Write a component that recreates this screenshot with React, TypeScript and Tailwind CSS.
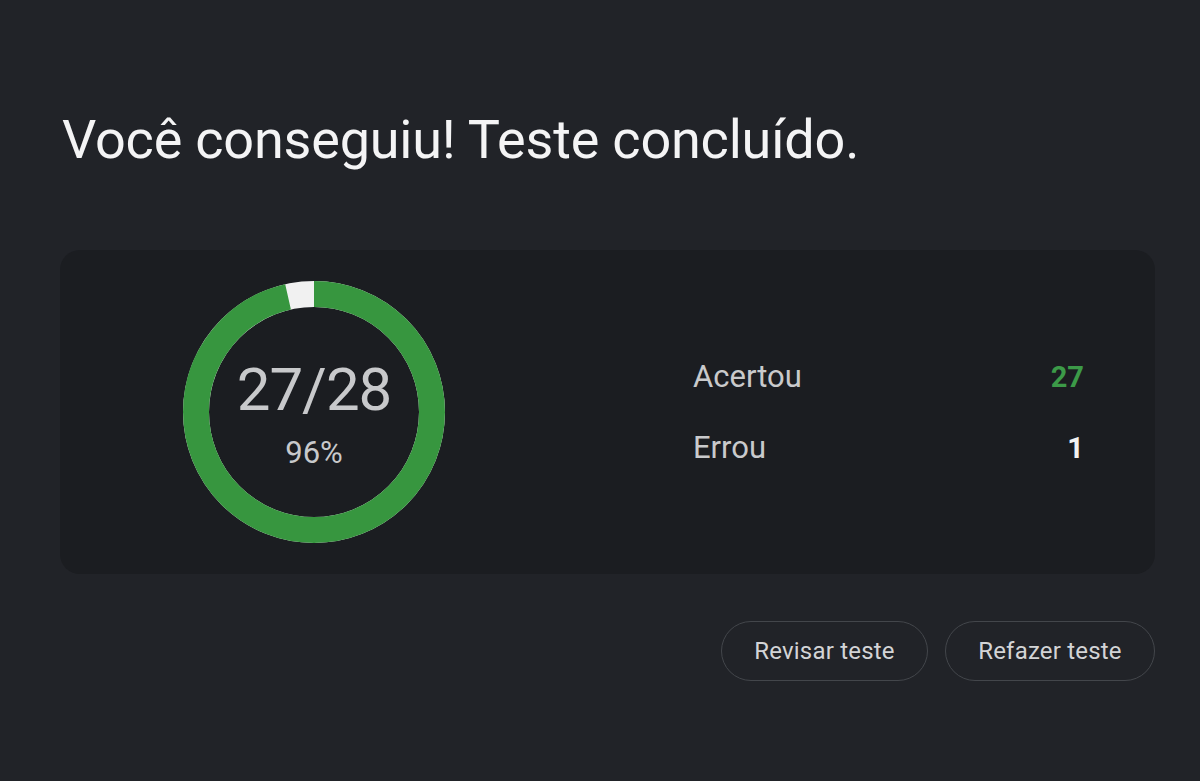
import React from "react";

const font = { fontFamily: "Roboto, 'Noto Sans', sans-serif" };

function ScoreRing({ right, total }: { right: number; total: number }) {
  const r = 118;
  const c = 2 * Math.PI * r;
  const frac = right / total;
  return (
    <div className="relative w-[262px] h-[262px]">
      <svg width="262" height="262" viewBox="0 0 262 262" className="-rotate-90">
        <circle cx="131" cy="131" r={r} fill="none" stroke="#f1f1f1" strokeWidth="26" />
        <circle
          cx="131"
          cy="131"
          r={r}
          fill="none"
          stroke="#37963f"
          strokeWidth="26"
          strokeDasharray={`${c * frac} ${c}`}
        />
      </svg>
      <div className="absolute inset-0 flex flex-col items-center justify-center">
        <div className="text-[60px] leading-none text-[#c8c9cb] tracking-[-1px] mt-1">
          {right}/{total}
        </div>
        <div className="text-[31px] leading-none text-[#c8c9cb] mt-[17px]">
          {Math.round(frac * 100)}%
        </div>
      </div>
    </div>
  );
}

export default function App() {
  return (
    <div className="min-h-[781px] w-full bg-[#212328] px-[60px] pt-[113px]" style={font}>
      <h1 className="text-[54px] leading-none text-[#f4f4f5] ml-[2px] tracking-[-0.2px]">
        Você conseguiu! Teste concluído.
      </h1>

      <div className="mt-[83px] h-[324px] w-[1095px] rounded-[20px] bg-[#1b1d21] flex items-center">
        <div className="ml-[123px]">
          <ScoreRing right={27} total={28} />
        </div>
        <div className="ml-[248px] w-[391px] flex flex-col gap-[35px]">
          <div className="flex justify-between items-center leading-[36px]">
            <span className="text-[31px] text-[#c9cacc]">Acertou</span>
            <span className="text-[29px] font-bold text-[#3c9a48]">27</span>
          </div>
          <div className="flex justify-between items-center leading-[36px]">
            <span className="text-[31px] text-[#c9cacc]">Errou</span>
            <span className="text-[29px] font-bold text-[#f2f2f2]">1</span>
          </div>
        </div>
      </div>

      <div className="mt-[47px] w-[1095px] flex justify-end gap-[17px]">
        <button className="h-[60px] w-[207px] rounded-full border border-[#43464b] text-[24px] tracking-[0.2px] text-[#d3d4d6]">
          Revisar teste
        </button>
        <button className="h-[60px] w-[210px] rounded-full border border-[#43464b] text-[24px] tracking-[0.2px] text-[#d3d4d6]">
          Refazer teste
        </button>
      </div>
    </div>
  );
}
